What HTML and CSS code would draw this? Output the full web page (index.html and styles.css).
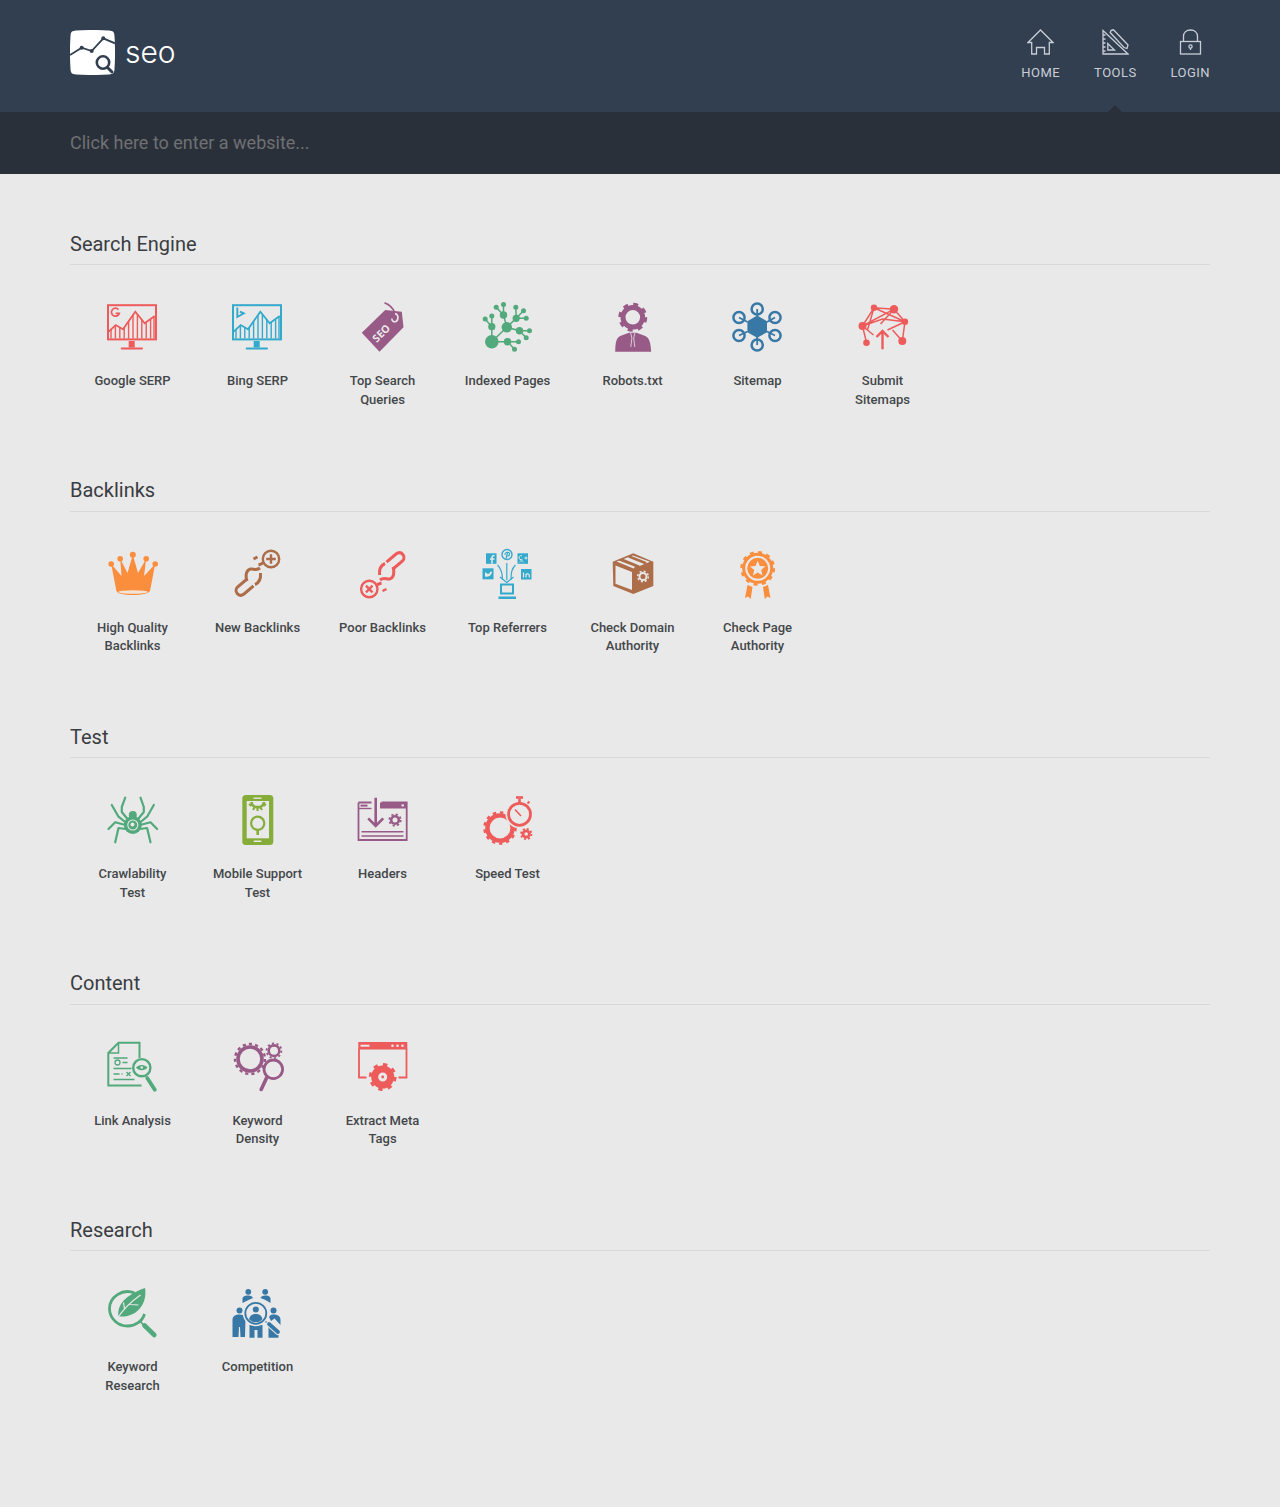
FILE: index.html
```html
<!DOCTYPE html>
<html lang="en">
<head>
<meta charset="utf-8">
<title>SEO Tools</title>
<link rel="stylesheet" href="styles.css">
</head>
<body>
<svg class="defs" width="0" height="0" aria-hidden="true">
  <defs>
    <symbol id="monitor" viewBox="0 0 50 50">
      <rect x="1" y="3.2" width="48" height="34.2" fill="none" stroke="currentColor" stroke-width="2"/>
      <path d="M1.7 29.7L8.7 23L16 27.3L28.3 9.7L37.7 21.3L47.7 14" fill="none" stroke="currentColor" stroke-width="1.8"/>
      <path d="M4 27.5V36.5M8.4 23.3V36.5M12.8 25.4V36.5M17.2 25.6V36.5M21.6 19.3V36.5M26 13V36.5M30.4 12.3V36.5M34.8 17.7V36.5M39.2 20.2V36.5M43.6 17V36.5M47 14.5V36.5" fill="none" stroke="currentColor" stroke-width="1.4"/>
      <rect x="21.7" y="39" width="6" height="6.5" fill="currentColor"/>
      <rect x="13.7" y="45.5" width="22.3" height="2" rx="1" fill="currentColor"/>
    </symbol>
  </defs>
</svg>

<header class="top">
  <a class="logo" href="#">
    <svg class="logo-mark" width="45" height="45" viewBox="0 0 45 45">
      <path d="M6 0.5C16 -0.2 29 -0.2 39 0.5C43 0.8 44.3 2 44.5 6C45.2 16 45.2 29 44.5 39C44.3 43 43 44.3 39 44.5C29 45.2 16 45.2 6 44.5C2 44.3 0.7 43 0.5 39C-0.2 29 -0.2 16 0.5 6C0.7 2 2 0.8 6 0.5Z" fill="#fff"/>
      <path d="M0 25L11.7 17.7L21.7 21L33.3 8.3L45 13.3" fill="none" stroke="#323f50" stroke-width="1.8"/>
      <circle cx="11.7" cy="17.7" r="2" fill="#323f50"/>
      <circle cx="21.7" cy="21" r="2" fill="#323f50"/>
      <circle cx="33.3" cy="8.3" r="2" fill="#323f50"/>
      <circle cx="33" cy="33" r="10" fill="#fff"/>
      <circle cx="33" cy="32.5" r="6.2" fill="none" stroke="#323f50" stroke-width="2.6"/>
      <path d="M37.5 37.5L42 42" stroke="#323f50" stroke-width="3" stroke-linecap="round"/>
    </svg>
    <span class="logo-text">seo</span>
  </a>
  <nav class="nav">
    <a class="nav-item" href="#">
      <svg width="27" height="26" viewBox="0 0 27 26" fill="none" stroke="currentColor" stroke-width="1.3"><path d="M1 13.5L13.5 1L26 13.5H22.3V25H17.5V18.5H9.5V25H4.7V13.5Z"/></svg>
      <span>Home</span>
    </a>
    <a class="nav-item nav-active" href="#">
      <svg width="27" height="26" viewBox="0 0 27 26" fill="none" stroke="currentColor" stroke-width="1.3"><path d="M1 1.5V25H26L1 1.5Z"/><path d="M5.8 14.5V21H12.5Z"/><path d="M1 6H3.5M1 10H3.5M1 14H3.5M1 18H3.5M1 22H3.5"/><path d="M9 1.5L11.5 0.8L26 16L25 19.5L22 18.5L8.2 3.5Z"/></svg>
      <span>Tools</span>
    </a>
    <a class="nav-item" href="#">
      <svg width="27" height="26" viewBox="0 0 27 26" fill="none" stroke="currentColor" stroke-width="1.3"><rect x="3.5" y="12.5" width="20" height="12.5"/><path d="M6.5 12.5V7.5C6.5 3.5 9.5 1 13.5 1C17.5 1 20.5 3.5 20.5 7.5V12.5"/><circle cx="13.5" cy="17.5" r="1.6"/><path d="M13.5 19V21"/></svg>
      <span>Login</span>
    </a>
  </nav>
</header>

<div class="searchbar">
  <input class="search-input" type="text" placeholder="Click here to enter a website...">
</div>

<main class="main">

  <section class="group">
    <h2 class="group-title">Search Engine</h2>
    <ul class="tools">
      <li class="tool c-red">
        <svg class="icon" viewBox="0 0 50 50"><use href="#monitor"/><rect x="3" y="5" width="11" height="11" fill="#e9e9e9"/><path d="M11.5 7.6A4 4 0 1 0 12.3 11.3H8.6" fill="none" stroke="currentColor" stroke-width="1.7"/></svg>
        <span>Google SERP</span>
      </li>
      <li class="tool c-sky">
        <svg class="icon" viewBox="0 0 50 50"><use href="#monitor"/><rect x="3" y="5" width="11" height="11" fill="#e9e9e9"/><path d="M5.3 5.5V15L11.8 11.4L7.9 9.6" fill="none" stroke="currentColor" stroke-width="1.9"/></svg>
        <span>Bing SERP</span>
      </li>
      <li class="tool c-purple">
        <svg class="icon" viewBox="-0.5 0 50 50"><path d="M4.3 30.7L27.7 8L44.3 9.7L46 25.3L22 49.7Z" fill="currentColor"/><path d="M27 0.7C33 3 36 7 37.5 11" fill="none" stroke="currentColor" stroke-width="1.7"/><path d="M37.5 11.5C41 12.5 41.5 17.5 38.5 19.5C36 20.5 34 18.5 34.5 16.5" fill="none" stroke="#e9e9e9" stroke-width="1.6"/><text class="tag-text" x="23.8" y="34.5" transform="rotate(-45 24.3 31)" text-anchor="middle">SEO</text></svg>
        <span>Top Search Queries</span>
      </li>
      <li class="tool c-green">
        <svg class="icon" viewBox="-0.5 0 50 50"><path d="M9.3 39.7L24.3 25.3L21 13L21 2.3M21 13L13.7 5.3M24.3 25.3L33.7 16.3L33.3 5.3M33.7 16.3L41 8.7M33.7 16.3L43.7 16.3M24.3 25.3L37 28.7L47 28.7M37 28.7L43.7 35.7M9.3 39.7L25 39.7L36 39.7M25 39.7L32 47.3M9.3 39.7V24.7L2.7 17M9.3 24.7V14" fill="none" stroke="currentColor" stroke-width="1.5"/><g fill="currentColor"><circle cx="9.3" cy="39.7" r="6.8"/><circle cx="24.3" cy="25.3" r="5.2"/><circle cx="9.3" cy="24.7" r="3.6"/><circle cx="21" cy="13" r="3.7"/><circle cx="33.7" cy="16.3" r="3.6"/><circle cx="37" cy="28.7" r="3.7"/><circle cx="25" cy="39.7" r="3.7"/><circle cx="2.7" cy="17" r="2.5"/><circle cx="9.3" cy="14" r="2.5"/><circle cx="13.7" cy="5.3" r="2.5"/><circle cx="21" cy="2.5" r="2.5"/><circle cx="33.3" cy="5.3" r="2.5"/><circle cx="41" cy="8.7" r="2.5"/><circle cx="43.7" cy="16.3" r="2.5"/><circle cx="47" cy="28.7" r="2.5"/><circle cx="43.7" cy="35.7" r="2.5"/><circle cx="36" cy="39.7" r="2.5"/><circle cx="32" cy="47.3" r="2.5"/></g></svg>
        <span>Indexed Pages</span>
      </li>
      <li class="tool c-purple">
        <svg class="icon" viewBox="-0.5 0 50 50"><circle cx="25.3" cy="15.3" r="9.8" fill="none" stroke="currentColor" stroke-width="5"/><circle cx="25.3" cy="15.3" r="13" fill="none" stroke="currentColor" stroke-width="3" stroke-dasharray="5 5.21"/><path d="M7.7 49.7C8 39 9 35 14 33.5L21.5 30.7H29L36.5 33.5C41.5 35 43 39 43.7 49.7Z" fill="currentColor"/><path d="M23.2 31L24.4 36L23.3 45M27.4 31L26.2 36L27.3 45" fill="none" stroke="#e9e9e9" stroke-width="0.8"/></svg>
        <span>Robots.txt</span>
      </li>
      <li class="tool c-blue">
        <svg class="icon" viewBox="-0.5 0 50 50"><path d="M24.7 13.6L34.5 19.2V30.2L24.7 35.8L14.9 30.2V19.2Z" fill="currentColor"/><path d="M24.7 7V14M6.5 15.5L15 20M42.5 15.5L34.5 20M6.5 33.5L15 29.5M42.5 33.5L34.5 29.5M24.7 43V35" fill="none" stroke="currentColor" stroke-width="1.8"/><g fill="none" stroke="currentColor" stroke-width="2.5"><circle cx="24.7" cy="7" r="5.6"/><circle cx="6.5" cy="15.5" r="5.6"/><circle cx="42.5" cy="15.5" r="5.6"/><circle cx="6.5" cy="33.5" r="5.6"/><circle cx="42.5" cy="33.5" r="5.6"/><circle cx="24.7" cy="43" r="5.6"/></g></svg>
        <span>Sitemap</span>
      </li>
      <li class="tool c-red">
        <svg class="icon" viewBox="-0.5 0 50 50"><path d="M5 24L16.5 5.7L36.5 7.2L47.5 19.7L44.8 39M5 24L9 40.7M5 24L16 33M16.5 5.7L47.5 19.7M16.5 5.7L10 28M36.5 7.2L5 24M36.5 7.2L23 22M5 24L25 17L47.5 19.7M30 28L47.5 19.7M35 28L44.8 39" fill="none" stroke="currentColor" stroke-width="1.5"/><g fill="currentColor"><circle cx="5" cy="24" r="4"/><circle cx="16.5" cy="5.7" r="3.2"/><circle cx="36.5" cy="7.2" r="4.2"/><circle cx="47.5" cy="19.7" r="3.2"/><circle cx="9" cy="40.7" r="3.3"/><circle cx="44.8" cy="39" r="4"/></g><path d="M25 47.3V29M18.5 35L25 28.5L31.5 35" fill="none" stroke="#e9e9e9" stroke-width="5.5"/><path d="M25 47.3V29M19 35L25 29L31 35" fill="none" stroke="currentColor" stroke-width="2.4"/></svg>
        <span>Submit Sitemaps</span>
      </li>
    </ul>
  </section>

  <section class="group">
    <h2 class="group-title">Backlinks</h2>
    <ul class="tools">
      <li class="tool c-orange">
        <svg class="icon" viewBox="-0.5 0 50 50"><path d="M8.7 41L3.7 15L14 27L12.7 9.7L20 24L25.3 5.7L30.5 24L38.7 9.7L36.5 27L47.7 15L42.7 41C43 44 35 46 25.5 46C16 46 8 44 8.7 41Z" fill="currentColor"/><ellipse cx="25.5" cy="43" rx="14.5" ry="1.7" fill="#f3e3d6"/><g fill="currentColor"><circle cx="3.7" cy="15" r="2.8"/><circle cx="12.7" cy="9.7" r="2.8"/><circle cx="25.3" cy="5.7" r="3"/><circle cx="38.7" cy="9.7" r="2.8"/><circle cx="47.7" cy="15" r="2.8"/></g></svg>
        <span>High Quality Backlinks</span>
      </li>
      <li class="tool c-brown">
        <svg class="icon" viewBox="-0.5 0 50 50"><circle cx="38.5" cy="10" r="8.2" fill="none" stroke="currentColor" stroke-width="2.4"/><path d="M38.5 5.2V14.8M33.7 10H43.3" stroke="currentColor" stroke-width="2.4"/><g fill="none" stroke="currentColor" stroke-width="3"><path d="M14.5 30L5 38C1 42 6 49 11.5 45L21 36.8"/><path d="M14.5 32C12.5 26 14 21 18 20C21 19.5 24 22 27.5 19"/><path d="M28 24C28.5 30 26 34 22.5 35.5"/><path d="M21 10L25 8"/><path d="M26 16C28 15.5 30 14.5 31.5 13"/></g></svg>
        <span>New Backlinks</span>
      </li>
      <li class="tool c-red">
        <svg class="icon" viewBox="-0.5 0 50 50"><circle cx="11.8" cy="40" r="8.2" fill="none" stroke="currentColor" stroke-width="2.4"/><path d="M8.5 36.7L15 43.3M15 36.7L8.5 43.3" stroke="currentColor" stroke-width="2.4"/><g fill="none" stroke="currentColor" stroke-width="3"><path d="M35.5 20L45 12C49 8 44 1 38.5 5L29 13.2"/><path d="M35.5 18C37.5 24 36 29 32 30C29 30.5 26 28 22.5 31"/><path d="M22 26C21.5 20 24 16 27.5 14.5"/><path d="M29 40L25 42" stroke-width="2.4"/><path d="M24 34C22 34.5 20 35.5 18.5 37"/></g></svg>
        <span>Poor Backlinks</span>
      </li>
      <li class="tool c-sky">
        <svg class="icon" viewBox="-0.5 0 50 50"><g fill="currentColor"><rect x="3.5" y="4.3" width="10.5" height="10.5"/><rect x="35" y="4.3" width="10.5" height="10.5"/><rect x="0" y="19.3" width="11" height="11"/><rect x="38.5" y="20" width="10.5" height="10.5"/><rect x="16" y="47.5" width="17.5" height="2.5"/></g><circle cx="24.5" cy="5.5" r="5" fill="none" stroke="currentColor" stroke-width="1.4"/><path d="M23.5 9.5L25 3.5M22.5 6C22 3 27 2 27 5C27 7 25 7.5 24.3 6.5" fill="none" stroke="currentColor" stroke-width="1.1"/><path d="M9.5 14.8V8.5C9.5 7 10.5 6.5 12 6.5M7.5 10H12" fill="none" stroke="#e9e9e9" stroke-width="1.5"/><path d="M39.5 7A2 2 0 1 0 40 10M37 13C38 11.5 40 11.5 41 13M42 9H45M43.5 7.5V10.5" fill="none" stroke="#e9e9e9" stroke-width="1"/><path d="M2.5 23C4.5 25 6 25 7 24.5C7 23 8.5 22 9.5 23C9 26 7 28.5 2.5 27.5" fill="#e9e9e9"/><path d="M41 23.5V28.5M43.5 28.5V24.8M43.5 26C44 24.5 46.8 24.5 46.8 26.5V28.5" fill="none" stroke="#e9e9e9" stroke-width="1.2"/><path d="M15 16C19 20 20 24 20 31M24.3 14V31M33 16C29 20 28.5 24 28.5 31M17.5 28L24.3 33.5L31 28" fill="none" stroke="currentColor" stroke-width="1.2"/><rect x="18.5" y="35.5" width="12" height="9" fill="none" stroke="currentColor" stroke-width="2"/></svg>
        <span>Top Referrers</span>
      </li>
      <li class="tool c-brown">
        <svg class="icon" viewBox="-0.5 0 50 50"><path d="M25.8 4.3L45.8 12.7V37L25.8 45L5.8 37L5.2 12.7Z" fill="currentColor"/><path d="M8 16.5L24.5 23V41L8 34.8Z" fill="#e9e9e9"/><path d="M9 12.5L25.5 6.5L42.5 12.8L26 19.5Z" fill="#e9e9e9"/><path d="M15 9.5L32 16.5V23.5L27 21V17.5L10 11Z" fill="currentColor"/><path d="M21.5 7.5L38.5 14.3" fill="none" stroke="currentColor" stroke-width="2.6"/><circle cx="35.5" cy="27.5" r="3.5" fill="none" stroke="#e9e9e9" stroke-width="1.9"/><circle cx="35.5" cy="27.5" r="5.3" fill="none" stroke="#e9e9e9" stroke-width="1.5" stroke-dasharray="2 2.16"/></svg>
        <span>Check Domain Authority</span>
      </li>
      <li class="tool c-orange">
        <svg class="icon" viewBox="-0.5 0 50 50"><circle cx="25.2" cy="19.3" r="15.5" fill="currentColor"/><circle cx="25.2" cy="19.3" r="16.2" fill="none" stroke="currentColor" stroke-width="2.4" stroke-dasharray="4 4.48"/><circle cx="25.2" cy="19.3" r="11.5" fill="none" stroke="#e9e9e9" stroke-width="2"/><path d="M25.2 11.8L27.4 16.9L32.8 17.4L28.7 21L30 26.4L25.2 23.6L20.4 26.4L21.7 21L17.6 17.4L23 16.9Z" fill="#e9e9e9"/><path d="M15 36L20 38L18.2 50L15.5 47.5L12.5 49Z" fill="currentColor"/><path d="M35.5 36L30.5 38L32.3 50L35 47.5L38 49Z" fill="currentColor"/></svg>
        <span>Check Page Authority</span>
      </li>
    </ul>
  </section>

  <section class="group">
    <h2 class="group-title">Test</h2>
    <ul class="tools">
      <li class="tool c-green">
        <svg class="icon" viewBox="-0.5 0 50 50"><g fill="none" stroke="currentColor" stroke-width="2.2" stroke-linejoin="round" stroke-linecap="round"><path d="M20 24L14.3 17L14.3 12L17.7 2.7"/><path d="M17.7 27L11 21.7L4.3 10"/><path d="M18 30L7.7 27.3L1 34"/><path d="M18 34L11 33L7.7 47.3"/><path d="M30.6 24L36.3 17L36.3 12L33 2.7"/><path d="M33 27L39.6 21.7L46.3 10"/><path d="M32.6 30L43 27.3L49.6 34"/><path d="M32.6 34L39.6 33L43 47.3"/></g><circle cx="25.3" cy="20" r="4" fill="currentColor"/><circle cx="25.3" cy="30" r="9" fill="currentColor"/><circle cx="25.3" cy="30" r="5" fill="none" stroke="#e9e9e9" stroke-width="1.1"/><circle cx="25" cy="29.5" r="2" fill="#e9e9e9"/></svg>
        <span>Crawlability Test</span>
      </li>
      <li class="tool c-lime">
        <svg class="icon" viewBox="-0.5 0 50 50"><rect x="9.8" y="0" width="31" height="50" rx="3.5" fill="currentColor"/><rect x="14.2" y="6" width="22.3" height="37.3" fill="#e9e9e9"/><rect x="21" y="2.5" width="8" height="1.3" fill="#e9e9e9"/><rect x="21" y="45.5" width="8" height="1.6" rx="0.8" fill="#e9e9e9"/><circle cx="25.2" cy="28.3" r="6.6" fill="none" stroke="currentColor" stroke-width="2.2"/><path d="M25.2 35V40" stroke="currentColor" stroke-width="2.6"/><path d="M19 7C19.5 14 31 14 31.5 7" fill="none" stroke="currentColor" stroke-width="2.8"/><path d="M16.5 9L19 11M20.5 15L22 12.5M29.5 15L28 12.5M33.5 9L31 11M25 16V13" stroke="currentColor" stroke-width="2"/></svg>
        <span>Mobile Support Test</span>
      </li>
      <li class="tool c-purple">
        <svg class="icon" viewBox="-0.5 0 50 50"><path d="M1 7.5H14M24 7.5H49.2V45H1V7.5" fill="none" stroke="currentColor" stroke-width="1.8"/><rect x="22.5" y="7.5" width="26.7" height="6" fill="currentColor"/><rect x="44" y="9.4" width="2.4" height="2" fill="#e9e9e9"/><path d="M1 13.5H14" stroke="currentColor" stroke-width="1.4"/><rect x="3" y="9.6" width="7" height="2" fill="currentColor"/><path d="M18.2 2.7V31M10.7 23.3L18.2 31L25.7 23.3" fill="none" stroke="currentColor" stroke-width="2.6"/><circle cx="37.5" cy="25" r="3.8" fill="none" stroke="currentColor" stroke-width="2.6"/><circle cx="37.5" cy="25" r="5.7" fill="none" stroke="currentColor" stroke-width="1.8" stroke-dasharray="2.2 2.28"/><path d="M4 36.7H46M4 41H46" stroke="currentColor" stroke-width="1.4"/></svg>
        <span>Headers</span>
      </li>
      <li class="tool c-red">
        <svg class="icon" viewBox="-0.5 0 50 50"><circle cx="17.5" cy="33" r="12.6" fill="none" stroke="currentColor" stroke-width="4.4"/><circle cx="17.5" cy="33" r="15.6" fill="none" stroke="currentColor" stroke-width="2.4" stroke-dasharray="3.4 3.9"/><circle cx="37" cy="19.3" r="14" fill="#e9e9e9"/><circle cx="37" cy="19.3" r="11" fill="none" stroke="currentColor" stroke-width="2.8"/><path d="M37 8V4" stroke="currentColor" stroke-width="2.6"/><path d="M33.5 2.5H40.5" stroke="currentColor" stroke-width="2.6"/><path d="M47 6.5L45 8.5" stroke="currentColor" stroke-width="2"/><path d="M32.5 14.5L38.5 21" stroke="currentColor" stroke-width="1.6"/><circle cx="43.7" cy="39" r="3.2" fill="none" stroke="currentColor" stroke-width="2.8"/><circle cx="43.7" cy="39" r="5.2" fill="none" stroke="currentColor" stroke-width="1.8" stroke-dasharray="2 2.08"/></svg>
        <span>Speed Test</span>
      </li>
    </ul>
  </section>

  <section class="group">
    <h2 class="group-title">Content</h2>
    <ul class="tools">
      <li class="tool c-green">
        <svg class="icon" viewBox="-0.5 0 50 50"><path d="M32 16V0.8H11L0.8 11V43.5H34" fill="none" stroke="currentColor" stroke-width="2"/><path d="M11 1V11H1" fill="none" stroke="currentColor" stroke-width="1.5"/><circle cx="10" cy="20.5" r="2.5" fill="none" stroke="currentColor" stroke-width="1.3"/><path d="M6 16H20M15 20.5H20M6 26.5H24M6 32H12M14 32H15M19 30L23 34M23 30L19 34M6 37.5H27" fill="none" stroke="currentColor" stroke-width="1.4"/><circle cx="34.3" cy="25.7" r="8.6" fill="#e9e9e9" stroke="currentColor" stroke-width="2.4"/><path d="M28.5 25.5C31 22 37.5 22 40 25.5C37.5 29 31 29 28.5 25.5Z" fill="currentColor"/><circle cx="34.3" cy="25.5" r="1.2" fill="#e9e9e9"/><path d="M39.7 36L47.3 47.7" stroke="currentColor" stroke-width="3.8" stroke-linecap="round"/></svg>
        <span>Link Analysis</span>
      </li>
      <li class="tool c-purple">
        <svg class="icon" viewBox="-0.5 0 50 50"><circle cx="17.5" cy="17" r="12" fill="none" stroke="currentColor" stroke-width="3.6"/><circle cx="17.5" cy="17" r="15" fill="none" stroke="currentColor" stroke-width="2.4" stroke-dasharray="3.2 3.08"/><circle cx="41.5" cy="8.7" r="5.3" fill="none" stroke="currentColor" stroke-width="2.6"/><circle cx="41.5" cy="8.7" r="7.4" fill="none" stroke="currentColor" stroke-width="1.8" stroke-dasharray="2.2 2.45"/><circle cx="40.8" cy="27.3" r="9.3" fill="#e9e9e9" stroke="currentColor" stroke-width="2.8"/><path d="M34.5 35L28.7 47.5" stroke="currentColor" stroke-width="3.6" stroke-linecap="round"/></svg>
        <span>Keyword Density</span>
      </li>
      <li class="tool c-red">
        <svg class="icon" viewBox="-0.5 0 50 50"><rect x="0.8" y="0" width="49" height="7.5" fill="currentColor"/><rect x="3" y="2.7" width="9" height="2" fill="#e9e9e9"/><circle cx="35" cy="3.7" r="1.3" fill="#e9e9e9"/><circle cx="40" cy="3.7" r="1.3" fill="#e9e9e9"/><circle cx="45" cy="3.7" r="1.3" fill="#e9e9e9"/><path d="M1.5 7V35.5H9M41 35.5H49V7" fill="none" stroke="currentColor" stroke-width="1.8"/><circle cx="25.2" cy="35" r="8" fill="none" stroke="currentColor" stroke-width="7"/><circle cx="25.2" cy="35" r="12.5" fill="none" stroke="currentColor" stroke-width="2.8" stroke-dasharray="4.4 5.4"/><circle cx="25.2" cy="35" r="1.4" fill="currentColor"/></svg>
        <span>Extract Meta Tags</span>
      </li>
    </ul>
  </section>

  <section class="group">
    <h2 class="group-title">Research</h2>
    <ul class="tools">
      <li class="tool c-green">
        <svg class="icon" viewBox="-0.5 0 50 50"><path d="M27 5C15 0 2 9 2 20.5C2 31 11 38 20 38C28 38 35 33 37 26" fill="none" stroke="currentColor" stroke-width="2.8"/><path d="M11 28.5C9 17 18 7 37.5 0C40 14 31 30 11 28.5Z" fill="currentColor"/><path d="M9.5 31C15 22 23 14 33 7M17 21L16 14.5M22 16.5L31 17" fill="none" stroke="#e9e9e9" stroke-width="1.2"/><path d="M33 33.5L36 37" stroke="currentColor" stroke-width="1.8"/><path d="M37 37.5L46.8 47" stroke="currentColor" stroke-width="4.6" stroke-linecap="round"/></svg>
        <span>Keyword Research</span>
      </li>
      <li class="tool c-blue">
        <svg class="icon" viewBox="-0.5 0 50 50"><g fill="currentColor"><circle cx="15.8" cy="3.8" r="2.9"/><circle cx="32.7" cy="3.8" r="2.9"/><path d="M10 15V10C11 8 13 7.5 15.8 7.5C18.5 7.5 20 8.5 20.5 10L16 12Z"/><path d="M28 10C28.5 8.5 30 7.5 32.7 7.5C35.5 7.5 37 8 38 10V15L33 12Z"/><circle cx="7" cy="22.5" r="3"/><path d="M0 49V32C0 28 3 26.5 7 26.5C10 26.5 12 27.5 13 30L12.5 49H8L7.5 39H6.5L6 49Z"/><circle cx="41" cy="22.5" r="3"/><path d="M36.5 29C37.5 27 39 26.5 41 26.5C45 26.5 48 28 48 32V37L42 30.5L38.5 33Z"/><path d="M36 38L46 46V49.7H36Z"/><path d="M17 37H30V49.7H25V42H22V49.7H17Z"/><circle cx="23.3" cy="21.5" r="3"/><path d="M16.5 32C17 27.5 20 26 23.3 26C26.7 26 29.5 27.5 30 32C28 34 26 35 23.3 35C20.5 35 18.5 34 16.5 32Z"/></g><circle cx="23.3" cy="25.3" r="11" fill="none" stroke="#e9e9e9" stroke-width="4"/><circle cx="23.3" cy="25.3" r="10.5" fill="none" stroke="currentColor" stroke-width="1.8"/><path d="M33 33.5L36 36" stroke="currentColor" stroke-width="1.6"/><path d="M36.5 36L45.5 44" stroke="#e9e9e9" stroke-width="6" stroke-linecap="round"/><path d="M36.5 36L45.5 44" stroke="currentColor" stroke-width="3.8" stroke-linecap="round"/></svg>
        <span>Competition</span>
      </li>
    </ul>
  </section>

</main>
</body>
</html>
```

FILE: styles.css
```css
* { box-sizing: border-box; }

html, body {
  margin: 0;
  padding: 0;
}

body {
  background: #e9e9e9;
  font-family: Roboto, "Liberation Sans", sans-serif;
  font-size: 13px;
  line-height: 1.42857;
  color: #3d3f42;
  min-height: 1507px;
}

a { color: inherit; text-decoration: none; }

.defs { position: absolute; }

.top {
  height: 112px;
  background: #323f50;
  padding: 0 70px;
  display: flex;
  align-items: flex-start;
  justify-content: space-between;
}

.logo {
  display: flex;
  align-items: center;
  gap: 10px;
  margin-top: 30px;
  height: 45px;
  color: #fff;
}

.logo-mark { display: block; }

.logo-text {
  font-family: Inter, sans-serif;
  font-weight: 300;
  font-size: 30px;
  line-height: 45px;
}

.nav {
  display: flex;
  gap: 34px;
  padding-top: 29px;
}

.nav-item {
  position: relative;
  height: 83px;
  display: flex;
  flex-direction: column;
  align-items: center;
  color: #c9ced6;
  font-size: 13px;
  letter-spacing: 0.45px;
  line-height: 18px;
  text-transform: uppercase;
}

.nav-item svg {
  display: block;
  margin-bottom: 9px;
}

.nav-active::after {
  content: "";
  position: absolute;
  left: 50%;
  bottom: 0;
  margin-left: -7px;
  border-left: 7px solid transparent;
  border-right: 7px solid transparent;
  border-bottom: 7px solid #2a3039;
}

.searchbar {
  height: 62px;
  background: #2a3039;
  padding: 0 70px 2px;
  display: flex;
  align-items: center;
}

.search-input {
  width: 100%;
  height: 40px;
  padding: 0;
  border: 0;
  outline: 0;
  background: transparent;
  font-family: Roboto, sans-serif;
  font-size: 18px;
  color: #ddd;
}

.search-input::placeholder {
  color: #6e7074;
  opacity: 1;
}

.main {
  padding: 58.6px 70px 0;
}

.group {
  margin-bottom: 70.03px;
}

.group-title {
  margin: 0 0 37px;
  padding-bottom: 9.4px;
  border-bottom: 1px solid #d8d8d8;
  font-size: 20px;
  font-weight: 400;
  line-height: 22px;
  color: #3a3d41;
}

.tools {
  list-style: none;
  margin: 0;
  padding: 0;
  display: flex;
  flex-wrap: wrap;
}

.tool {
  width: 125px;
  padding: 0 16px;
  display: flex;
  flex-direction: column;
  align-items: center;
  text-align: center;
  font-weight: 500;
}

.icon {
  display: block;
  width: 50px;
  height: 50px;
  margin-bottom: 20px;
  margin-right: 1px;
  overflow: visible;
}

.tool span { color: #44474a; }

.tag-text {
  font-family: "Open Sans", sans-serif;
  font-size: 10.5px;
  font-weight: 700;
  fill: #e9e9e9;
}

.c-red { color: #ed5b5a; }
.c-sky { color: #33a9cc; }
.c-purple { color: #985a87; }
.c-green { color: #52a97b; }
.c-blue { color: #3878a6; }
.c-orange { color: #fb8e3d; }
.c-brown { color: #ac6d48; }
.c-lime { color: #86ad3a; }
```
